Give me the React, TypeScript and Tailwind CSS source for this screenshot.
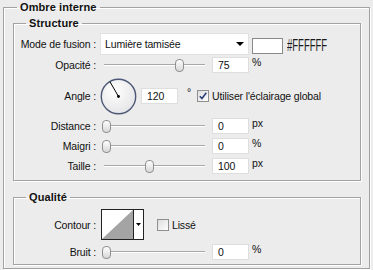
import React from "react";

const font = { fontFamily: '"Liberation Sans", Arial, sans-serif' };

function Thumb() {
  return (
    <svg width="9" height="13" viewBox="0 0 9 13">
      <defs>
        <linearGradient id="thumbFill" x1="0" y1="0" x2="0" y2="1">
          <stop offset="0%" stopColor="#ffffff" />
          <stop offset="100%" stopColor="#d6d6d6" />
        </linearGradient>
      </defs>
      <rect x="0.5" y="0.5" width="8" height="12" rx="3.5" fill="url(#thumbFill)" stroke="#8f8f8f" />
    </svg>
  );
}

function Slider({ pos }: { pos: number }) {
  return (
    <div className="relative w-[104px] h-[16px] shrink-0">
      <div className="absolute left-[3px] right-0 top-[7px] h-[1px] bg-[#a8a8a8]" />
      <div className="absolute left-[3px] right-0 top-[8px] h-[1px] bg-white" />
      <div className="absolute top-[2px]" style={{ left: pos }}>
        <Thumb />
      </div>
    </div>
  );
}

function NumBox({ value }: { value: string }) {
  return (
    <div className="w-[37px] h-[16px] bg-white border border-[#dedede] pl-[5px] leading-[14px] shrink-0">
      {value}
    </div>
  );
}

function Label({ children }: { children: React.ReactNode }) {
  return <div className="w-[83px] text-right shrink-0 pr-[1px]">{children}</div>;
}

function SliderRow({ label, pos, value, unit }: { label: string; pos: number; value: string; unit: string }) {
  return (
    <div className="flex items-center h-[16px]">
      <Label>{label}</Label>
      <div className="ml-[4px]">
        <Slider pos={pos} />
      </div>
      <div className="ml-[7px]">
        <NumBox value={value} />
      </div>
      <span className="ml-[3px] self-start leading-[11px]">{unit}</span>
    </div>
  );
}

function Checkbox({ checked }: { checked?: boolean }) {
  return (
    <svg width="12" height="12" viewBox="0 0 12 12" className="shrink-0">
      <defs>
        <linearGradient id="cbFill" x1="0" y1="0" x2="1" y2="1">
          <stop offset="0%" stopColor="#dcdcdc" />
          <stop offset="100%" stopColor="#ffffff" />
        </linearGradient>
      </defs>
      <rect x="0.5" y="0.5" width="11" height="11" fill="url(#cbFill)" stroke="#8e8f8f" />
      {checked && <path d="M2.8 6.2 L5 8.6 L9.3 2.8" fill="none" stroke="#2b3f7a" strokeWidth="1.6" />}
    </svg>
  );
}

function Dial() {
  return (
    <svg width="37" height="37" viewBox="0 0 37 37" className="shrink-0">
      <defs>
        <radialGradient id="dialFill" cx="0.4" cy="0.35" r="0.7">
          <stop offset="0%" stopColor="#ffffff" />
          <stop offset="100%" stopColor="#e4e4e6" />
        </radialGradient>
      </defs>
      <circle cx="18.5" cy="18.5" r="17.2" fill="url(#dialFill)" stroke="#4d5877" strokeWidth="1.4" />
      <line x1="18.5" y1="18.5" x2="10" y2="3.8" stroke="#000" strokeWidth="1" />
      <circle cx="18.5" cy="18.5" r="1.4" fill="#000" />
    </svg>
  );
}

const boxCls =
  "border border-[#a2a2a2] shadow-[inset_1px_1px_0_#fff,1px_1px_0_#fff] px-0 pb-0 m-0 min-w-0";

const legendCls = "px-[3px] font-bold text-[11px] leading-[14px] tracking-[0.1px]";

export default function App() {
  return (
    <div
      className="w-[373px] h-[270px] bg-[#ececec] text-[10.5px] tracking-[-0.15px] leading-[14px] text-[#111] overflow-hidden"
      style={font}
    >
      <fieldset className={`${boxCls} ml-[3px] w-[367px]`}>
        <legend className={`ml-[13px] ${legendCls}`}>Ombre interne</legend>
        <div className="pt-[2px] pl-[9px] pr-[8px] pb-[3px]">
          <fieldset className={`${boxCls} w-[348px]`}>
            <legend className={`ml-[12px] ${legendCls}`}>Structure</legend>
            <div className="pt-[3px] pb-[6px] flex flex-col">
              <div className="flex items-center h-[22px]">
                <Label>Mode de fusion :</Label>
                <div className="ml-[3px] w-[149px] h-[22px] bg-white border border-[#e2e2e2] flex items-center justify-between pl-[4px] pr-[4px]">
                  <span>Lumière tamisée</span>
                  <svg width="8" height="4" viewBox="0 0 8 4">
                    <path d="M0 0 H8 L4 4 Z" fill="#000" />
                  </svg>
                </div>
                <div className="ml-[3px] w-[31px] h-[16px] bg-white border border-[#8a8a8a] mt-[4px]" />
                <span className="ml-[4px] text-[17px] tracking-normal leading-[16px] mt-[4px] inline-block scale-x-[0.56] origin-left text-[#1a1a1a]">
                  #FFFFFF
                </span>
              </div>
              <div className="mt-[2px]">
                <SliderRow label="Opacité :" pos={74} value="75" unit="%" />
              </div>
              <div className="flex items-center h-[36px] mt-[5px]">
                <Label>Angle :</Label>
                <div className="ml-[3px]">
                  <Dial />
                </div>
                <div className="ml-[4px]">
                  <NumBox value="120" />
                </div>
                <span className="ml-[9px] self-start mt-[9px] leading-[11px]">°</span>
                <div className="ml-[6px] flex items-center gap-[3px]">
                  <Checkbox checked />
                  <span>Utiliser l'éclairage global</span>
                </div>
              </div>
              <div className="mt-[4px] flex flex-col gap-[4px]">
                <SliderRow label="Distance :" pos={1} value="0" unit="px" />
                <SliderRow label="Maigri :" pos={1} value="0" unit="%" />
                <SliderRow label="Taille :" pos={44} value="100" unit="px" />
              </div>
            </div>
          </fieldset>
          <fieldset className={`${boxCls} w-[348px] mt-[9px]`}>
            <legend className={`ml-[12px] ${legendCls}`}>Qualité</legend>
            <div className="pt-[5px] pb-[4px] flex flex-col">
              <div className="flex items-center h-[31px]">
                <Label>Contour :</Label>
                <div className="ml-[4px] w-[43px] h-[31px] border border-[#222] bg-white flex">
                  <svg width="31" height="29" viewBox="0 0 31 29" className="shrink-0">
                    <path d="M0 29 L31 0 L31 29 Z" fill="#a4a4a4" />
                  </svg>
                  <div className="w-[1px] bg-[#222]" />
                  <div className="flex-1 flex items-center justify-center">
                    <svg width="5" height="3" viewBox="0 0 5 3">
                      <path d="M0 0 H5 L2.5 3 Z" fill="#000" />
                    </svg>
                  </div>
                </div>
                <div className="ml-[13px] flex items-center gap-[3px]">
                  <Checkbox />
                  <span>Lissé</span>
                </div>
              </div>
              <div className="mt-[4px]">
                <SliderRow label="Bruit :" pos={1} value="0" unit="%" />
              </div>
            </div>
          </fieldset>
        </div>
      </fieldset>
    </div>
  );
}
